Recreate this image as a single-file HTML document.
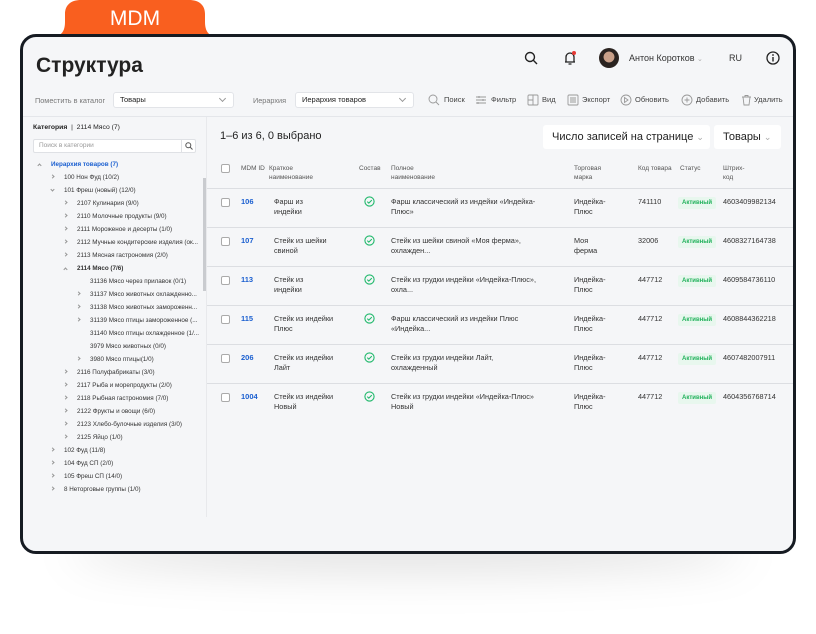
<!DOCTYPE html>
<html><head><meta charset="utf-8"><style>
*{margin:0;padding:0;box-sizing:border-box}
body{width:816px;height:634px;background:#fff;font-family:"Liberation Sans",sans-serif;position:relative;overflow:hidden;color:#222}
.a{position:absolute;white-space:nowrap}
.frame{left:20px;top:34px;width:776px;height:520px;border:3px solid #161b22;border-radius:16px;background:#f5f6f8;overflow:hidden}
.f{font-size:7.3px;color:#333}
.g{color:#777}
.sel{height:16px;background:#fff;border:1px solid #e2e4e8;border-radius:3px;font-size:7.5px;line-height:14px;padding-left:6px}
.sel:after{content:"";position:absolute;right:8px;top:3px;width:4px;height:4px;border-right:1px solid #999;border-bottom:1px solid #999;transform:rotate(45deg)}
.ti{font-size:6.3px;color:#333;height:13px;line-height:13px}
.r,.d,.u{position:absolute;width:3px;height:3px;border-right:1px solid #999;border-bottom:1px solid #999}
.r{transform:rotate(-45deg)}.d{transform:rotate(45deg)}.u{transform:rotate(-135deg)}
.hd{font-size:6.5px;color:#555;line-height:9px}
.cb{width:9px;height:9px;border:1px solid #aaa;border-radius:2px;background:#fff}
.id{color:#1a5fd0;font-size:7.5px;font-weight:bold}
.tx{font-size:7.3px;color:#333;line-height:10px}
.st{background:#e8f7ee;color:#20b15a;font-size:6px;padding:3px 4px;border-radius:2px;font-weight:bold}
.ln{height:1px;background:#dcdee2;left:207px;width:586px}
.tb{font-size:7.5px;color:#444;top:95px}
</style></head><body>
<div class="a" style="left:70px;top:530px;width:676px;height:40px;background:rgba(0,0,0,.13);filter:blur(22px);border-radius:50%"></div>
<svg class="a" style="left:45px;top:0" width="180" height="38" viewBox="0 0 180 38"><path d="M0 38 C14 38 20 34 20 22 V14 C20 5 26 0 36 0 H144 C154 0 160 5 160 14 V22 C160 34 166 38 180 38 Z" fill="#f95f1f"/><text x="90" y="25" text-anchor="middle" fill="#fff" font-family="Liberation Sans" font-size="21">MDM</text></svg>
<div class="a frame"></div>
<div class="a" style="left:36px;top:54px;font-size:21px;font-weight:bold;color:#222">Структура</div>
<svg class="a" style="left:524px;top:51px" width="14" height="14" viewBox="0 0 14 14"><circle cx="6" cy="6" r="4.5" fill="none" stroke="#222" stroke-width="1.4"/><line x1="9.3" y1="9.3" x2="13" y2="13" stroke="#222" stroke-width="1.4"/></svg>
<svg class="a" style="left:562px;top:50px" width="16" height="16" viewBox="0 0 16 16"><path d="M3 12h10M4 12V7a4 4 0 0 1 8 0v5M6.5 14h3" fill="none" stroke="#222" stroke-width="1.3"/><circle cx="12" cy="3" r="2" fill="#e53935"/></svg>
<div class="a" style="left:599px;top:48px;width:20px;height:20px;border-radius:50%;background:radial-gradient(circle at 50% 45%,#c9a089 0 35%,#2a2320 38%)"></div>
<div class="a" style="left:629px;top:53px;font-size:9px;color:#333">Антон Коротков <span style="color:#aaa;font-size:7px">&#8964;</span></div>
<div class="a" style="left:729px;top:53px;font-size:9px;color:#333">RU</div>
<svg class="a" style="left:766px;top:51px" width="14" height="14" viewBox="0 0 14 14"><circle cx="7" cy="7" r="6" fill="none" stroke="#222" stroke-width="1.3"/><line x1="7" y1="6" x2="7" y2="10.5" stroke="#222" stroke-width="1.4"/><circle cx="7" cy="4" r=".9" fill="#222"/></svg>
<div class="a f g" style="left:35px;top:96px">Поместить в каталог</div>
<div class="a sel" style="left:113px;top:92px;width:121px">Товары</div>
<div class="a f g" style="left:253px;top:96px">Иерархия</div>
<div class="a sel" style="left:295px;top:92px;width:119px">Иерархия товаров</div>
<svg class="a" style="left:428px;top:94px" width="360" height="12" fill="none" stroke="#999" stroke-width=".9">
<circle cx="5" cy="5" r="4"/><line x1="8" y1="8" x2="11" y2="11"/>
<path d="M48 3h10M48 6h10M48 9h10M51 2v2M55 5v2M50 8v2"/>
<rect x="100" y="1" width="10" height="10" rx="1"/><path d="M105 1v10M100 6h5"/>
<rect x="140" y="1" width="10" height="10" rx="1"/><path d="M142 4h6M142 6h6M142 8h6"/>
<circle cx="198" cy="6" r="5"/><path d="M196.5 3.5v5l3.5-2.5z"/>
<circle cx="259" cy="6" r="5"/><path d="M259 3.5v5M256.5 6h5"/>
<path d="M314 3h9M315 3l1 8h5l1-8M317 3V1.5h3V3"/>
</svg>
<div class="a tb" style="left:444px">Поиск</div>
<div class="a tb" style="left:491px">Фильтр</div>
<div class="a tb" style="left:542px">Вид</div>
<div class="a tb" style="left:582px">Экспорт</div>
<div class="a tb" style="left:635px">Обновить</div>
<div class="a tb" style="left:696px">Добавить</div>
<div class="a tb" style="left:754px">Удалить</div>
<div class="a" style="left:23px;top:116px;width:770px;height:1px;background:#e4e6ea"></div>
<div class="a" style="left:206px;top:117px;width:1px;height:400px;background:#e8e9ec"></div>
<div class="a" style="left:203px;top:178px;width:3px;height:113px;background:#c9cbcf"></div>
<div class="a" style="left:33px;top:124px;font-size:6.8px;color:#222"><b>Категория</b> &nbsp;| &nbsp;2114 Мясо (7)</div>
<div class="a" style="left:33px;top:139px;width:163px;height:14px;background:#fff;border:1px solid #dfe1e5;border-radius:2px;font-size:6.5px;color:#999;line-height:12px;padding-left:5px">Поиск в категории</div>
<div class="a" style="left:181px;top:139px;width:15px;height:14px;border-left:1px solid #dfe1e5"></div>
<svg class="a" style="left:185px;top:142px" width="8" height="8" viewBox="0 0 8 8"><circle cx="3.3" cy="3.3" r="2.5" fill="none" stroke="#555"/><line x1="5" y1="5" x2="7.5" y2="7.5" stroke="#555"/></svg>
<div id="tree" class="a" style="left:0;top:158px"></div>
<div class="a" style="left:220px;top:130px;font-size:11px;color:#222">1–6 из 6, 0 выбрано</div>
<div class="a" style="left:543px;top:125px;width:167px;height:24px;background:#fff;border-radius:3px;font-size:11px;line-height:24px;padding-left:9px;color:#222">Число записей на странице <span style="color:#aaa;font-size:9px">&#8964;</span></div>
<div class="a" style="left:714px;top:125px;width:67px;height:24px;background:#fff;border-radius:3px;font-size:11px;line-height:24px;padding-left:9px;color:#222">Товары <span style="color:#aaa;font-size:9px">&#8964;</span></div>
<div class="a cb" style="left:221px;top:164px"></div>
<div class="a hd" style="left:241px;top:164px">MDM ID</div>
<div class="a hd" style="left:269px;top:164px">Краткое<br>наименование</div>
<div class="a hd" style="left:359px;top:164px">Состав</div>
<div class="a hd" style="left:391px;top:164px">Полное<br>наименование</div>
<div class="a hd" style="left:574px;top:164px">Торговая<br>марка</div>
<div class="a hd" style="left:638px;top:164px">Код товара</div>
<div class="a hd" style="left:680px;top:164px">Статус</div>
<div class="a hd" style="left:723px;top:164px">Штрих-<br>код</div>
<div class="a ln" style="top:188px"></div>
<div id="rows"></div>
<script>
var t=[[0,"u","Иерархия товаров (7)","color:#1a5fd0;font-weight:bold"],[1,"r","100 Нон Фуд (10/2)"],[1,"d","101 Фреш (новый) (12/0)"],
[2,"r","2107 Кулинария (9/0)"],[2,"r","2110 Молочные продукты (9/0)"],[2,"r","2111 Мороженое и десерты (1/0)"],[2,"r","2112 Мучные кондитерские изделия (ок..."],[2,"r","2113 Мясная гастрономия (2/0)"],[2,"u","2114 Мясо (7/6)","font-weight:bold"],
[3,"","31136 Мясо через прилавок (0/1)"],[3,"r","31137 Мясо животных охлажденно..."],[3,"r","31138 Мясо животных замороженн..."],[3,"r","31139 Мясо птицы замороженное (..."],[3,"","31140 Мясо птицы охлажденное (1/..."],[3,"","3979 Мясо животных (0/0)"],[3,"r","3980 Мясо птицы(1/0)"],
[2,"r","2116 Полуфабрикаты (3/0)"],[2,"r","2117 Рыба и морепродукты (2/0)"],[2,"r","2118 Рыбная гастрономия (7/0)"],[2,"r","2122 Фрукты и овощи (6/0)"],[2,"r","2123 Хлебо-булочные изделия (3/0)"],[2,"r","2125 Яйцо (1/0)"],
[1,"r","102 Фуд (11/8)"],[1,"r","104 Фуд СП (2/0)"],[1,"r","105 Фреш СП (14/0)"],[1,"r","8 Неторговые группы (1/0)"]];
var h="";t.forEach(function(e,i){var y=i*13,x=51+e[0]*13;
if(e[1])h+='<div class="'+e[1]+'" style="left:'+(x-13)+'px;top:'+(y+(e[1]=="u"?6:4))+'px"></div>';
h+='<div class="a ti" style="left:'+x+'px;top:'+y+'px;'+(e[3]||"")+'">'+e[2]+'</div>';});
document.getElementById("tree").innerHTML=h;
var d=[["106","Фарш из<br>индейки","Фарш классический из индейки «Индейка-<br>Плюс»","Индейка-<br>Плюс","741110","4603409982134"],
["107","Стейк из шейки<br>свиной","Стейк из шейки свиной «Моя ферма»,<br>охлажден...","Моя<br>ферма","32006","4608327164738"],
["113","Стейк из<br>индейки","Стейк из грудки индейки «Индейка-Плюс»,<br>охла...","Индейка-<br>Плюс","447712","4609584736110"],
["115","Стейк из индейки<br>Плюс","Фарш классический из индейки Плюс<br>«Индейка...","Индейка-<br>Плюс","447712","4608844362218"],
["206","Стейк из индейки<br>Лайт","Стейк из грудки индейки Лайт,<br>охлажденный","Индейка-<br>Плюс","447712","4607482007911"],
["1004","Стейк из индейки<br>Новый","Стейк из грудки индейки «Индейка-Плюс»<br>Новый","Индейка-<br>Плюс","447712","4604356768714"]];
h="";d.forEach(function(r,i){var y=197+i*39;
h+='<div class="a cb" style="left:221px;top:'+(y+1)+'px"></div><div class="a id" style="left:241px;top:'+y+'px">'+r[0]+'</div>'+
'<div class="a tx" style="left:274px;top:'+y+'px">'+r[1]+'</div>'+
'<svg class="a" style="left:364px;top:'+(y-1)+'px" width="11" height="11" viewBox="0 0 11 11"><circle cx="5.5" cy="5.5" r="4.6" fill="none" stroke="#1fb86b" stroke-width="1.1"/><path d="M3.3 5.6l1.5 1.5 3-3" fill="none" stroke="#1fb86b" stroke-width="1.1"/></svg>'+
'<div class="a tx" style="left:391px;top:'+y+'px">'+r[2]+'</div><div class="a tx" style="left:574px;top:'+y+'px">'+r[3]+'</div>'+
'<div class="a tx" style="left:638px;top:'+y+'px">'+r[4]+'</div><div class="a st" style="left:678px;top:'+y+'px">Активный</div>'+
'<div class="a tx" style="left:723px;top:'+y+'px">'+r[5]+'</div>';
if(i<5)h+='<div class="a ln" style="top:'+(y+30)+'px"></div>';});
document.getElementById("rows").innerHTML=h;
</script>
</body></html>
